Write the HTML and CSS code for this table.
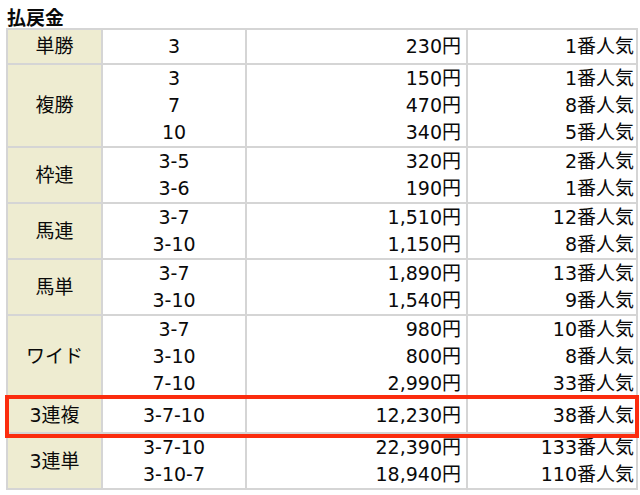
FILE: index.html
```html
<!DOCTYPE html>
<html lang="ja">
<head>
<meta charset="utf-8">
<link rel="stylesheet" href="styles.css">
</head>
<body>
<div class="payout">
  <h2 class="title">払戻金</h2>
  <table class="pay-table">
    <colgroup>
      <col class="c-type"><col class="c-num"><col class="c-yen"><col class="c-pop">
    </colgroup>
    <tbody>
      <tr class="single">
        <th>単勝</th>
        <td class="num">3</td>
        <td class="yen">230円</td>
        <td class="pop">1番人気</td>
      </tr>
      <tr>
        <th>複勝</th>
        <td class="num">3<br>7<br>10</td>
        <td class="yen">150円<br>470円<br>340円</td>
        <td class="pop">1番人気<br>8番人気<br>5番人気</td>
      </tr>
      <tr>
        <th>枠連</th>
        <td class="num">3-5<br>3-6</td>
        <td class="yen">320円<br>190円</td>
        <td class="pop">2番人気<br>1番人気</td>
      </tr>
      <tr>
        <th>馬連</th>
        <td class="num">3-7<br>3-10</td>
        <td class="yen">1,510円<br>1,150円</td>
        <td class="pop">12番人気<br>8番人気</td>
      </tr>
      <tr>
        <th>馬単</th>
        <td class="num">3-7<br>3-10</td>
        <td class="yen">1,890円<br>1,540円</td>
        <td class="pop">13番人気<br>9番人気</td>
      </tr>
      <tr>
        <th>ワイド</th>
        <td class="num">3-7<br>3-10<br>7-10</td>
        <td class="yen">980円<br>800円<br>2,990円</td>
        <td class="pop">10番人気<br>8番人気<br>33番人気</td>
      </tr>
      <tr class="single highlight">
        <th><span class="mark"></span>3連複</th>
        <td class="num">3-7-10</td>
        <td class="yen">12,230円</td>
        <td class="pop">38番人気</td>
      </tr>
      <tr>
        <th>3連単</th>
        <td class="num">3-7-10<br>3-10-7</td>
        <td class="yen">22,390円<br>18,940円</td>
        <td class="pop">133番人気<br>110番人気</td>
      </tr>
    </tbody>
  </table>
</div>
</body>
</html>
```
FILE: styles.css
```css
html, body {
  margin: 0;
  padding: 0;
  background: #ffffff;
}
body {
  font-family: "DejaVu Sans", "Noto Sans CJK JP", sans-serif;
  color: #0a0a0a;
}
.payout {
  padding: 5px 0 0 6px;
  width: 634px;
}
.title {
  margin: 0 0 0 1px;
  font-family: "Noto Sans CJK JP", sans-serif;
  font-size: 19px;
  line-height: 23px;
  font-weight: 700;
  color: #0a0a0a;
}
.pay-table {
  border-collapse: collapse;
  table-layout: fixed;
  width: 630px;
  font-size: 19px;
  line-height: 27px;
}
.c-type { width: 95px; }
.c-num { width: 144px; }
.c-yen { width: 221px; }
.c-pop { width: 170px; }
.pay-table th,
.pay-table td {
  border: 2px solid #d5d5d5;
  padding: 0;
  vertical-align: middle;
  white-space: nowrap;
}
.pay-table th {
  background: #eeecd1;
  font-weight: 400;
  text-align: center;
  position: relative;
}
.pay-table .num { text-align: center; }
.pay-table .yen { text-align: right; padding-right: 5px; }
.pay-table .pop { text-align: right; padding-right: 2px; }
.pay-table tr.single th,
.pay-table tr.single td {
  padding-top: 3px;
  padding-bottom: 3px;
}
.mark {
  position: absolute;
  left: -3px;
  top: -4px;
  width: 626px;
  height: 35px;
  border: 4px solid #fb2c0e;
  pointer-events: none;
  z-index: 2;
}
```
